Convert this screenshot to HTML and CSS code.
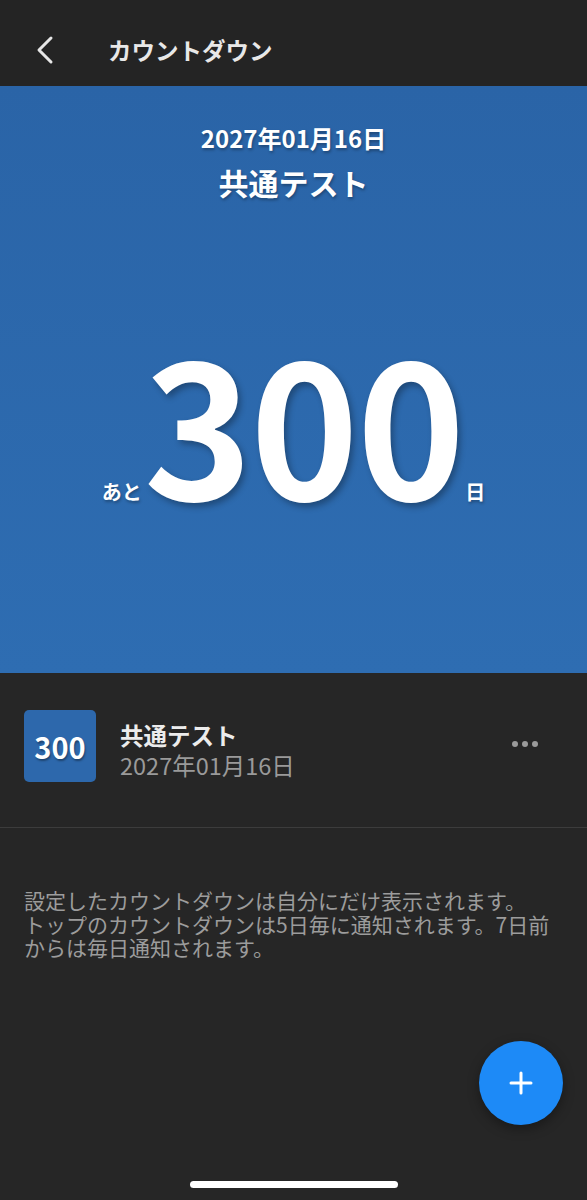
FILE: index.html
```html
<!DOCTYPE html>
<html lang="ja">
<head>
    <meta charset="UTF-8">
    <meta name="viewport" content="width=device-width, initial-scale=1.0">
    <title>カウントダウン</title>
    <link rel="stylesheet" href="styles.css">
</head>
<body>

    <div class="screen">
        <!-- Top bar -->
        <header class="app-bar">
            <button class="back-btn" aria-label="戻る">
                <svg width="20" height="30" viewBox="0 0 20 30">
                    <path d="M16 3 L4 15 L16 27" fill="none" stroke="#e6e6e6" stroke-width="3" stroke-linecap="round" stroke-linejoin="round"/>
                </svg>
            </button>
            <h1 class="app-title">カウントダウン</h1>
        </header>

        <!-- Main countdown -->
        <section class="hero">
            <p class="hero-date">2027年01月16日</p>
            <p class="hero-title">共通テスト</p>
            <div class="count">
                <span class="count-pre">あと</span>
                <span class="count-num">300</span>
                <span class="count-unit">日</span>
            </div>
        </section>

        <!-- Saved countdowns -->
        <div class="event-row">
            <div class="event-thumb">300</div>
            <div class="event-info">
                <p class="event-name">共通テスト</p>
                <p class="event-date">2027年01月16日</p>
            </div>
            <button class="more-btn" aria-label="メニュー">
                <svg width="28" height="10" viewBox="0 0 28 10">
                    <circle cx="4" cy="5" r="3" fill="#9a9a9a"/>
                    <circle cx="14" cy="5" r="3" fill="#9a9a9a"/>
                    <circle cx="24" cy="5" r="3" fill="#9a9a9a"/>
                </svg>
            </button>
        </div>

        <p class="note">設定したカウントダウンは自分にだけ表示されます。<br>トップのカウントダウンは5日毎に通知されます。7日前からは毎日通知されます。</p>

        <button class="fab" aria-label="追加">
            <svg width="26" height="26" viewBox="0 0 26 26">
                <path d="M13 3 V23 M3 13 H23" stroke="#ffffff" stroke-width="3" stroke-linecap="round"/>
            </svg>
        </button>

        <div class="home-indicator"></div>
    </div>

</body>
</html>
```

FILE: styles.css
```css
body {
    margin: 0;
    padding: 0;
    background-color: #262626;
    font-family: "Noto Sans CJK JP", "Noto Sans", sans-serif;
}

p {
    margin: 0;
}

button {
    background: none;
    border: none;
    padding: 0;
    cursor: pointer;
}

.screen {
    position: relative;
    width: 587px;
    height: 1200px;
    background-color: #262626;
    overflow: hidden;
}

/* Top bar */
.app-bar {
    height: 86px;
    box-sizing: border-box;
    padding-top: 14px;
    display: flex;
    align-items: center;
    background-color: #242424;
}

.back-btn {
    display: flex;
    margin-left: 35px;
}

.app-title {
    margin: 0 0 0 53px;
    font-size: 23.5px;
    font-weight: 700;
    color: #e8e8e8;
}

/* Countdown hero */
.hero {
    height: 587px;
    display: flex;
    flex-direction: column;
    align-items: center;
    background: linear-gradient(180deg, #2a64a7 0%, #2e6db2 100%);
    color: #ffffff;
    text-shadow: 1px 2px 3px rgba(0, 0, 0, 0.3);
}

.hero-date {
    margin-top: 36px;
    font-size: 24px;
    font-weight: 700;
    line-height: 31px;
}

.hero-title {
    margin-top: 9px;
    font-size: 30px;
    font-weight: 700;
    line-height: 40px;
}

.count {
    display: flex;
    align-items: baseline;
    margin-top: 126px;
}

.count-pre,
.count-unit {
    font-size: 20px;
    font-weight: 700;
}

.count-pre {
    margin-right: 2px;
}

.count-num {
    font-size: 184px;
    font-weight: 700;
    line-height: 1;
    letter-spacing: -2px;
    margin: 0 2px 0 0;
    text-shadow: 3px 4px 6px rgba(0, 0, 0, 0.3);
}

/* Event list row */
.event-row {
    display: flex;
    align-items: flex-start;
    padding: 37px 24px 45px;
    border-bottom: 1px solid #3c3c3c;
}

.event-thumb {
    width: 72px;
    height: 72px;
    display: flex;
    align-items: center;
    justify-content: center;
    background-color: #2d68ac;
    border-radius: 5px;
    color: #ffffff;
    font-size: 29px;
    font-weight: 700;
    text-shadow: 1px 2px 2px rgba(0, 0, 0, 0.35);
}

.event-info {
    flex: 1;
    margin: 10px 0 0 24px;
}

.event-name {
    font-size: 23.5px;
    font-weight: 700;
    line-height: 30px;
    color: #ececec;
}

.event-date {
    font-size: 23.5px;
    line-height: 30px;
    color: #9a9a9a;
}

.more-btn {
    display: flex;
    margin: 29px 24px 0 0;
}

/* Footnote */
.note {
    padding: 61px 24px 0;
    font-size: 21px;
    line-height: 23.5px;
    color: #9c9c9c;
}

/* Floating add button */
.fab {
    position: absolute;
    right: 24px;
    bottom: 75px;
    width: 84px;
    height: 84px;
    border-radius: 50%;
    display: flex;
    align-items: center;
    justify-content: center;
    background-color: #1d8af7;
    box-shadow: 0 4px 12px rgba(0, 0, 0, 0.35);
}

.home-indicator {
    position: absolute;
    left: 190px;
    bottom: 12px;
    width: 208px;
    height: 7px;
    border-radius: 4px;
    background-color: #ffffff;
}
```
